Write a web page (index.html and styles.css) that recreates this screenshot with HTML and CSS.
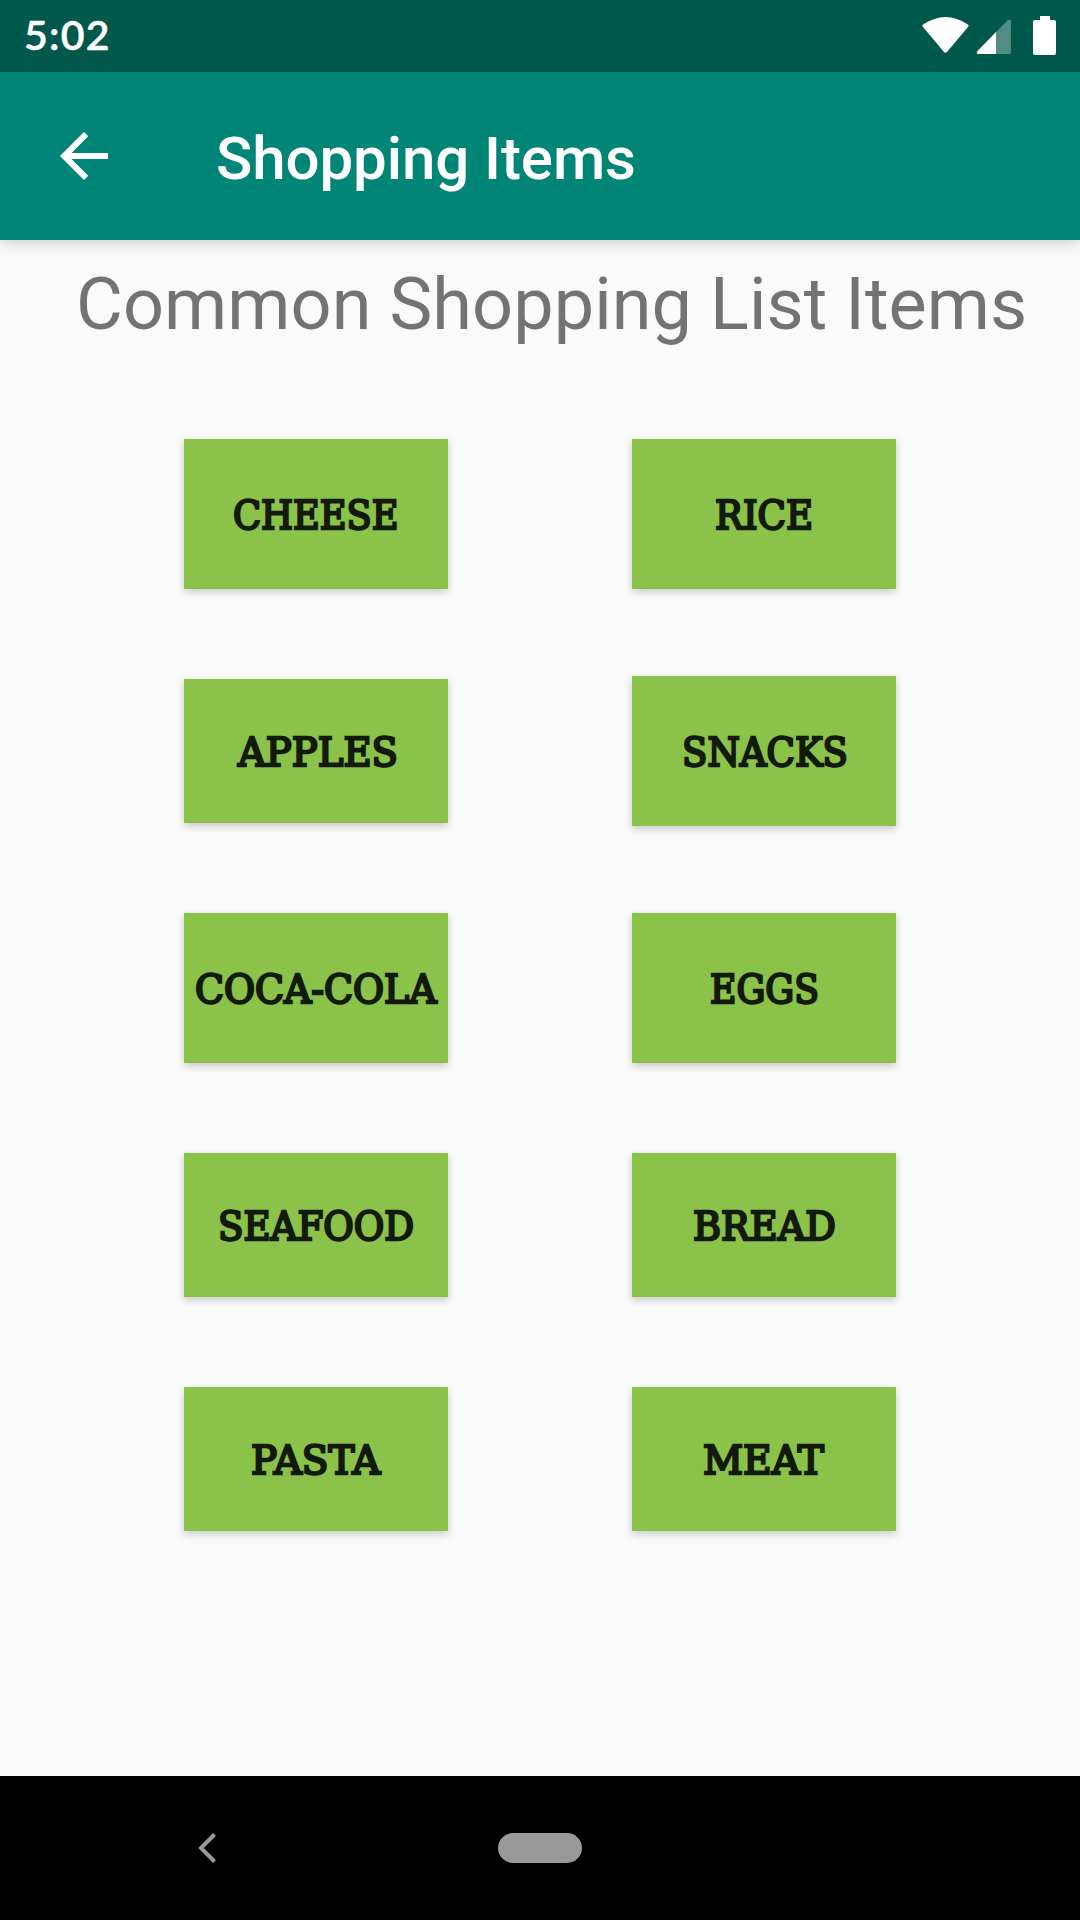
FILE: index.html
```html
<!DOCTYPE html>
<html lang="en">
<head>
<meta charset="utf-8">
<title>Shopping Items</title>
<link rel="stylesheet" href="styles.css">
</head>
<body>
<div class="screen">
  <header class="status-bar">
    <span class="clock">5:02</span>
    <svg class="status-icons" width="140" height="72" viewBox="0 0 140 72">
      <path fill="#fff" d="M3 24.500Q25.500 9.500 48 24.500Q49.300 25.500 48 27L27 52Q25.500 53.500 24 52L3 27Q1.700 25.500 3 24.500Z"/>
      <path fill="#fff" fill-opacity=".32" d="M76 32 87.500 20.500Q91 18 91 22V52Q91 54 89 54H76Z"/>
      <path fill="#fff" d="M76 32V54H58.500Q55.500 54 57.500 51Z"/>
      <path fill="#fff" d="M120 16H130V20H134Q136 20 136 22V53Q136 55 134 55H115Q113 55 113 53V22Q113 20 115 20H120Z"/>
    </svg>
  </header>
  <div class="app-bar">
    <svg class="back" width="48" height="48" viewBox="0 0 24 24"><path fill="#fff" d="M24 10.500H5.740L14.120 2.120 12 0 0 12 12 24l2.120-2.120L5.740 13.500H24Z"/></svg>
    <h1 class="title">Shopping Items</h1>
  </div>
  <main class="content">
    <h2 class="heading">Common Shopping List Items</h2>
    <div class="grid">
      <button class="item"><svg class="label"><text x="49" y="89.500" textLength="165.500" lengthAdjust="spacingAndGlyphs">CHEESE</text></svg></button>
      <button class="item"><svg class="label"><text x="83" y="89.500" textLength="98" lengthAdjust="spacingAndGlyphs">RICE</text></svg></button>
      <button class="item short"><svg class="label"><text x="54" y="89.500" textLength="160" lengthAdjust="spacingAndGlyphs">APPLES</text></svg></button>
      <button class="item"><svg class="label"><text x="50" y="89.500" textLength="166" lengthAdjust="spacingAndGlyphs">SNACKS</text></svg></button>
      <button class="item"><svg class="label"><text x="11" y="89.500" textLength="241.500" lengthAdjust="spacingAndGlyphs">COCA-COLA</text></svg></button>
      <button class="item"><svg class="label"><text x="78" y="89.500" textLength="109" lengthAdjust="spacingAndGlyphs">EGGS</text></svg></button>
      <button class="item short"><svg class="label"><text x="34" y="89.500" textLength="196" lengthAdjust="spacingAndGlyphs">SEAFOOD</text></svg></button>
      <button class="item short"><svg class="label"><text x="61" y="89.500" textLength="143" lengthAdjust="spacingAndGlyphs">BREAD</text></svg></button>
      <button class="item short"><svg class="label"><text x="67" y="89.500" textLength="129.500" lengthAdjust="spacingAndGlyphs">PASTA</text></svg></button>
      <button class="item short"><svg class="label"><text x="71" y="89.500" textLength="121" lengthAdjust="spacingAndGlyphs">MEAT</text></svg></button>
    </div>
  </main>
  <nav class="nav-bar">
    <svg class="nav-back" width="18" height="30" viewBox="0 0 18 30"><path fill="none" stroke="#999" stroke-width="4" d="M16.500 1.500 3 15 16.500 28.500"/></svg>
    <span class="home"></span>
  </nav>
</div>
</body>
</html>
```
FILE: styles.css
```css
* { box-sizing: border-box; }
body { margin: 0; font-family: Roboto, sans-serif; }
.screen { width: 1080px; height: 1920px; display: flex; flex-direction: column; background: #fafafa; overflow: hidden; }
.status-bar { position: relative; z-index: 1; height: 72px; flex: none; display: flex; justify-content: space-between; align-items: center; padding: 0 20px 0 24px; background: #00574b; }
.clock { margin-top: -2px; color: #fff; font-family: Lato, sans-serif; font-weight: 600; font-size: 41px; line-height: 70px; letter-spacing: 1.3px; -webkit-text-stroke: .5px #fff; }
.app-bar { height: 168px; flex: none; display: flex; align-items: center; padding-left: 60px; background: #008577; box-shadow: 0 3px 14px rgba(0,0,0,.18); }
.back { margin-top: -1px; }
.title { margin: 6px 0 0 108px; color: #fff; font-size: 60px; font-weight: 500; line-height: 70px; letter-spacing: -.08px; }
.content { flex: 1; display: flex; flex-direction: column; }
.heading { margin: 23px 0 0 76px; color: #737373; font-size: 72px; font-weight: 400; line-height: 84px; letter-spacing: .08px; white-space: nowrap; }
.grid { margin: 92px 0 0 184px; display: grid; grid-template-columns: 264px 264px; grid-template-rows: 150px 150px 150px 150px 144px; gap: 87px 184px; align-items: center; }
.item { width: 264px; height: 150px; padding: 0; border: 0; display: flex; align-items: center; background: #8bc34a; box-shadow: 0 3px 8px rgba(0,0,0,.2); overflow: hidden; }
.short { height: 144px; }
.label { width: 264px; height: 150px; flex: none; fill: #141a0b; stroke: #141a0b; stroke-width: 2.4px; font-family: "DejaVu Serif", serif; font-weight: 400; font-size: 39px; }
.nav-bar { height: 144px; flex: none; display: flex; align-items: center; background: #000; padding-left: 198px; }
.home { width: 84px; height: 30px; margin-left: 282px; border-radius: 15px; background: #999; }
```
